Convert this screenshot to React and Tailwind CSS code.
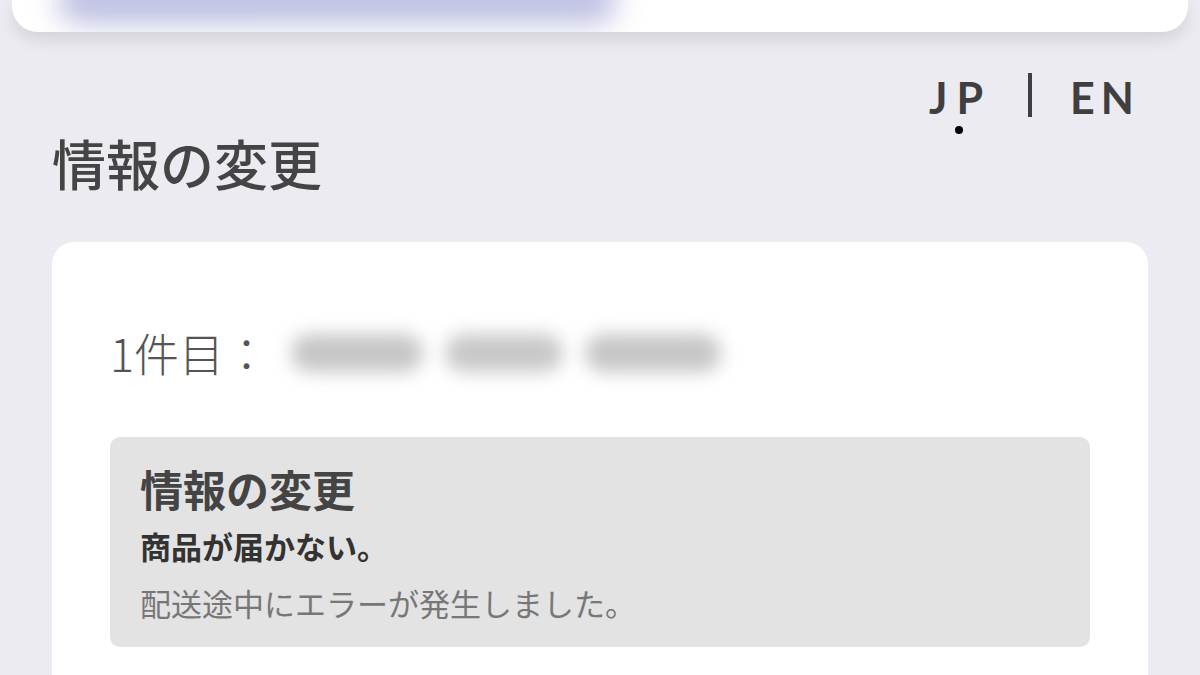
import React from 'react';

const jp = { fontFamily: '"Noto Sans CJK JP", "Noto Sans", sans-serif' };

const BlurredNumber = () => (
  <div className="flex items-center gap-[22px] ml-[22px]">
    <span className="block w-[132px] h-[38px] rounded-full bg-[#c6c6c6] blur-[9px]" />
    <span className="block w-[118px] h-[38px] rounded-full bg-[#c8c8c8] blur-[9px]" />
    <span className="block w-[136px] h-[38px] rounded-full bg-[#c6c6c6] blur-[9px]" />
  </div>
);

const LangSwitch = () => (
  <div className="flex items-start justify-end pr-[60px] text-[#3f3f3f]" style={{ fontFamily: 'Lato, "Liberation Sans", sans-serif' }}>
    <div className="relative flex items-start">
      <span className="text-[43px] font-bold leading-none">J</span>
      <span className="text-[43px] font-bold leading-none ml-[9px]">P</span>
      <span className="absolute top-[50px] left-[26px] w-[8px] h-[8px] rounded-full bg-black" />
    </div>
    <span className="w-[4px] h-[44px] bg-[#3f3f3f] ml-[45px] mr-[38px] -mt-[3px]" />
    <span className="text-[43px] font-bold leading-none tracking-[0.14em]">EN</span>
  </div>
);

const App = () => {
  return (
    <div className="w-[1200px] h-[675px] bg-[#ecebf1] overflow-hidden" style={jp}>
      <div className="relative mx-[12px] h-[32px] bg-white rounded-b-[26px] shadow-[0_8px_16px_rgba(0,0,0,0.10)] overflow-hidden">
        <div className="absolute left-[45px] -top-[22px] w-[560px] h-[46px] rounded-full bg-[#a8acd8] blur-[14px] opacity-75" />
      </div>

      <div className="mt-[44px]">
        <LangSwitch />
      </div>

      <h1 className="ml-[52px] mt-[17px] text-[54px] font-medium leading-none text-[#444]">情報の変更</h1>

      <div className="mx-[52px] mt-[52px] bg-white rounded-t-[22px] px-[58px] pt-[88px] h-[500px]">
        <div className="flex items-center text-[#555]">
          <span className="text-[45px] font-light leading-none">1件目：</span>
          <BlurredNumber />
        </div>

        <div className="mt-[62px] bg-[#e3e3e3] rounded-[10px] pl-[30px] pt-[30px] h-[210px]">
          <p className="text-[43px] font-bold leading-none text-[#444]">情報の変更</p>
          <p className="mt-[20px] text-[31px] font-bold leading-none text-[#333]">商品が届かない。</p>
          <p className="mt-[26px] text-[31px] leading-none text-[#777]">配送途中にエラーが発生しました。</p>
        </div>
      </div>
    </div>
  );
};

export default App;
